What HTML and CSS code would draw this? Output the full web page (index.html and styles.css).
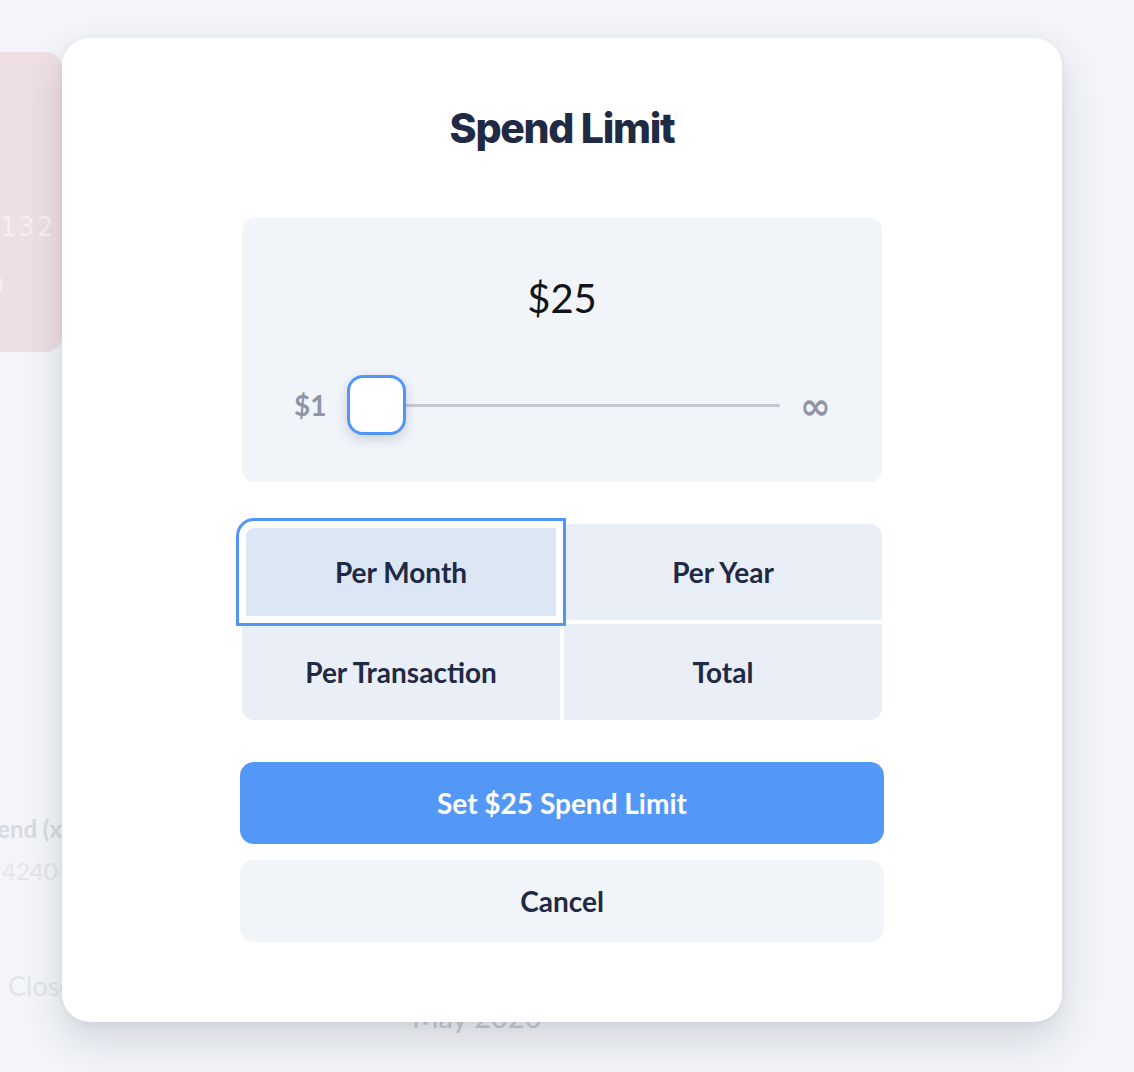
FILE: index.html
```html
<!DOCTYPE html>
<html lang="en">
<head>
<meta charset="utf-8">
<title>Spend Limit</title>
<link rel="stylesheet" href="styles.css">
</head>
<body>
<div class="page">
  <div class="side">
    <div class="card">
      <div class="card-num">4821 0093 7132</div>
      <div class="card-exp">12/20</div>
    </div>
    <div class="info">
      <div class="info-label">Spend (x</div>
      <div class="info-value">4240</div>
    </div>
    <div class="close-link">Close</div>
  </div>
  <div class="main">
    <div class="date">May 2020</div>
  </div>
</div>

<div class="modal">
  <h1 class="title">Spend Limit</h1>
  <div class="panel">
    <div class="amount">$25</div>
    <div class="slider-row">
      <span class="slider-min">$1</span>
      <div class="slider">
        <div class="track"></div>
        <div class="thumb"></div>
      </div>
      <span class="slider-max">∞</span>
    </div>
  </div>
  <div class="options">
    <div class="opt opt-tl selected">Per Month</div>
    <div class="opt opt-tr">Per Year</div>
    <div class="opt opt-bl">Per Transaction</div>
    <div class="opt opt-br">Total</div>
  </div>
  <button class="btn btn-primary">Set $25 Spend Limit</button>
  <button class="btn btn-secondary">Cancel</button>
</div>
</body>
</html>
```

FILE: styles.css
```css
* { box-sizing: border-box; }

html, body {
  margin: 0;
  padding: 0;
}

body {
  width: 1134px;
  height: 1072px;
  overflow: hidden;
  background: #f3f5f9;
  font-family: "Lato", "Noto Sans", sans-serif;
  position: relative;
}

/* background page */
.page {
  display: flex;
  height: 100%;
}

.side {
  width: 300px;
  margin-left: -238px;
  padding-top: 52px;
  display: flex;
  flex-direction: column;
  flex-shrink: 0;
}

.card {
  height: 300px;
  background: #eedfe3;
  border-radius: 16px;
  padding: 160px 0 0 24px;
  color: #f6f0f2;
}

.card-num {
  font-family: "DejaVu Sans Mono", monospace;
  font-size: 26px;
  letter-spacing: 3px;
  line-height: 30px;
  text-align: right;
  padding-right: 6px;
}

.card-exp {
  font-family: "Lato", sans-serif;
  font-size: 26px;
  line-height: 30px;
  margin-top: 28px;
  width: 217px;
  text-align: right;
}

.info {
  margin-top: 462px;
  padding-left: 80px;
}

.info-label {
  font-size: 24px;
  font-weight: 700;
  color: #d8dae1;
  line-height: 30px;
  text-align: right;
  white-space: nowrap;
  direction: rtl;
  overflow: hidden;
}

.info-value {
  font-size: 24px;
  color: #e3e5ea;
  line-height: 30px;
  margin-top: 12px;
  padding-left: 160px;
}

.close-link {
  font-size: 27px;
  color: #e2e4e9;
  line-height: 30px;
  margin-top: 85px;
  padding-left: 246px;
}

.main {
  flex: 1;
  padding-top: 1002px;
  padding-left: 350px;
}

.date {
  font-size: 29px;
  color: #c9cbd1;
  line-height: 30px;
}

/* modal */
.modal {
  position: absolute;
  left: 62px;
  top: 38px;
  width: 1000px;
  height: 984px;
  background: #ffffff;
  border-radius: 28px;
  box-shadow: 0 18px 40px rgba(40, 48, 70, 0.16), 0 2px 10px rgba(40, 48, 70, 0.06);
  display: flex;
  flex-direction: column;
  align-items: center;
  padding-top: 68px;
}

.title {
  margin: 0;
  font-family: "Inter", "Noto Sans", sans-serif;
  font-weight: 800;
  font-size: 41px;
  line-height: 44px;
  letter-spacing: -1.3px;
  color: #1f2a44;
}

.panel {
  margin-top: 68px;
  width: 640px;
  height: 264px;
  background: #f1f4f9;
  border-radius: 12px;
  padding: 58px 52px 0 52px;
  display: flex;
  flex-direction: column;
}

.amount {
  text-align: center;
  font-size: 40px;
  line-height: 44px;
  color: #111418;
}

.slider-row {
  margin-top: 55px;
  height: 60px;
  display: flex;
  align-items: center;
}

.slider-min {
  font-size: 28px;
  font-weight: 700;
  color: #8f95a6;
  width: 53px;
  line-height: 30px;
}

.slider {
  position: relative;
  flex: 1;
  height: 60px;
  display: flex;
  align-items: center;
}

.track {
  width: 100%;
  height: 3px;
  background: #c5c8d0;
  border-radius: 2px;
}

.thumb {
  position: absolute;
  left: 0;
  top: 0;
  width: 59px;
  height: 60px;
  background: #ffffff;
  border: 3px solid #5196f6;
  border-radius: 16px;
  box-shadow: 0 4px 12px rgba(30, 40, 70, 0.18);
}

.slider-max {
  margin-left: 20px;
  width: 30px;
  font-family: "DejaVu Sans", sans-serif;
  font-size: 37px;
  font-weight: 700;
  line-height: 30px;
  color: #8f95a6;
  padding-top: 4px;
}

.options {
  margin-top: 42px;
  width: 640px;
  display: grid;
  grid-template-columns: 1fr 1fr;
  grid-template-rows: 96px 96px;
  gap: 4px;
}

.opt {
  background: #eaeff7;
  display: flex;
  align-items: center;
  justify-content: center;
  font-size: 28px;
  font-weight: 700;
  color: #1f2a44;
}

.opt-tl { border-top-left-radius: 12px; }
.opt-tr { border-top-right-radius: 12px; }
.opt-bl { border-bottom-left-radius: 12px; }
.opt-br { border-bottom-right-radius: 12px; }

.opt.selected {
  position: relative;
  z-index: 1;
  background: #dce7f6;
  box-shadow: inset 0 0 0 4px #ffffff;
  outline: 3px solid #5196f6;
  outline-offset: 3px;
  border-radius: 12px 0 0 0;
}

.btn {
  display: block;
  width: 644px;
  height: 82px;
  border: none;
  border-radius: 14px;
  font-family: "Lato", "Noto Sans", sans-serif;
  font-size: 28px;
  font-weight: 700;
  cursor: pointer;
}

.btn-primary {
  margin-top: 42px;
  background: #5397f7;
  color: #ffffff;
}

.btn-secondary {
  margin-top: 16px;
  background: #f1f4f9;
  color: #1f2a44;
}
```
